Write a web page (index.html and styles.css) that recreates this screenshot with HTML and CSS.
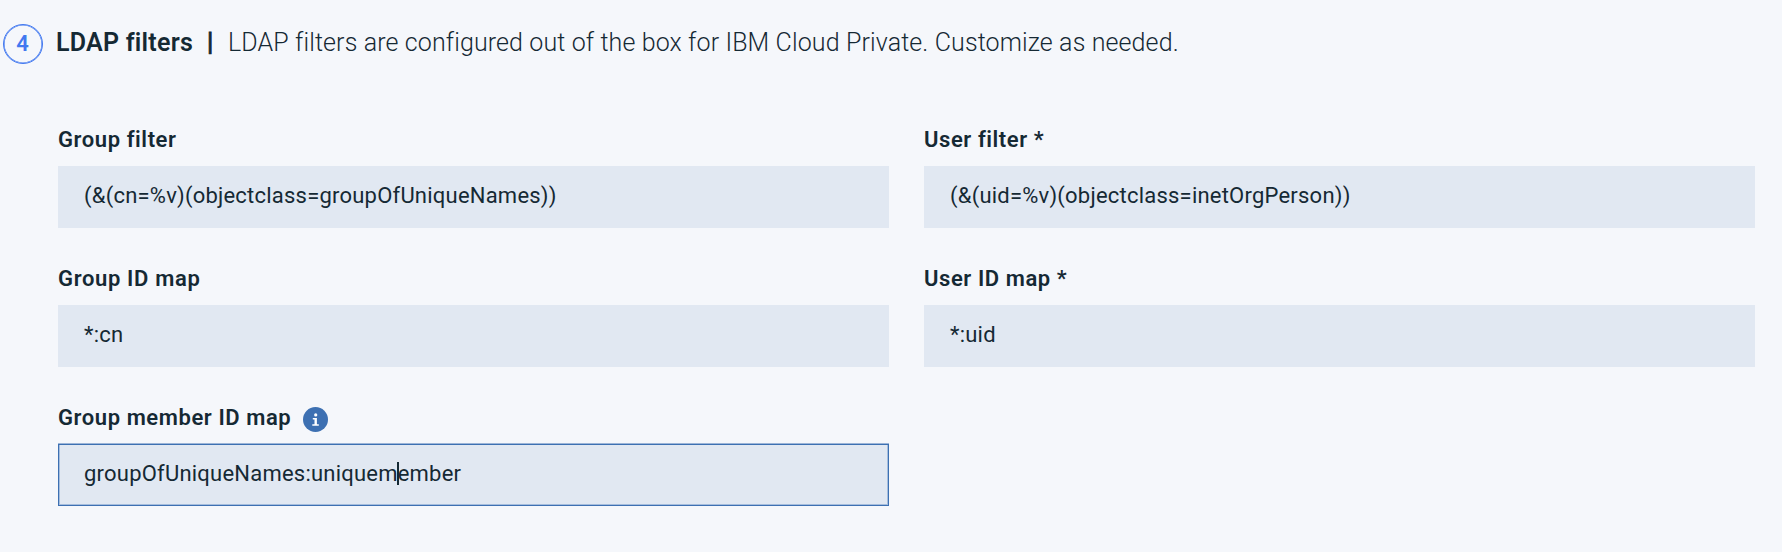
FILE: index.html
```
<!DOCTYPE html>
<html lang="en">
<head>
<meta charset="utf-8">
<title>LDAP filters</title>
<link rel="stylesheet" href="styles.css">
</head>
<body>
<section class="step">
  <header class="step-header">
    <span class="step-number">4</span>
    <h2 class="step-title">LDAP filters</h2>
    <span class="divider">|</span>
    <p class="step-description">LDAP filters are configured out of the box for IBM Cloud Private. Customize as needed.</p>
  </header>
  <div class="fields">
    <div class="field">
      <div class="label">Group filter</div>
      <div class="input">(&amp;(cn=%v)(objectclass=groupOfUniqueNames))</div>
    </div>
    <div class="field">
      <div class="label">User filter *</div>
      <div class="input">(&amp;(uid=%v)(objectclass=inetOrgPerson))</div>
    </div>
    <div class="field">
      <div class="label spaced">Group ID map</div>
      <div class="input">*:cn</div>
    </div>
    <div class="field">
      <div class="label">User ID map *</div>
      <div class="input">*:uid</div>
    </div>
    <div class="field">
      <div class="label">Group member ID map
        <svg class="info" viewBox="0 0 25 25" aria-hidden="true">
          <circle cx="12.5" cy="12.5" r="12.5" fill="#3d70b2"/>
          <circle cx="12.7" cy="7.9" r="1.6" fill="#fff"/>
          <path d="M9.8 11h4.1v6.2h1.9v1.6H9.3v-1.6h2.2v-4.6H9.8z" fill="#fff"/>
        </svg>
      </div>
      <div class="input focused">groupOfUniqueNames:uniquem<span class="caret"></span>ember</div>
    </div>
  </div>
</section>
</body>
</html>
```
FILE: styles.css
```
* { box-sizing: border-box; }

body {
  margin: 0;
  background: #f5f7fb;
  color: #152934;
  font-family: Roboto, "Liberation Sans", sans-serif;
}

.step { padding: 24px 27px 0 3px; }

.step-header {
  display: flex;
  align-items: flex-start;
  height: 103px;
}

.step-number {
  display: flex;
  align-items: center;
  justify-content: center;
  width: 40px;
  height: 40px;
  margin-right: 13px;
  padding: 0 1px 1px 0;
  border: 1px solid #4178f0;
  border-radius: 50%;
  box-shadow: inset 0 0 0 0.6px #4178f0;
  color: #4178f0;
  font-size: 22px;
  font-weight: 600;
}

.step-title,
.divider,
.step-description {
  margin: 4px 0 0;
  font-size: 25px;
  line-height: 30px;
  white-space: nowrap;
}

.step-title {
  width: 151px;
  font-weight: 600;
  letter-spacing: 0.25px;
}

.divider {
  width: 21px;
  font-weight: 600;
  -webkit-text-stroke: 0.8px #152934;
}

.step-description {
  font-weight: 300;
  letter-spacing: 0.12px;
}

.fields {
  display: grid;
  grid-template-columns: 1fr 1fr;
  gap: 37px 35px;
  padding-left: 55px;
}

.label {
  display: flex;
  align-items: center;
  gap: 12px;
  height: 26px;
  margin-bottom: 13px;
  font-size: 22px;
  font-weight: 600;
  line-height: 26px;
  letter-spacing: 0.58px;
}

.field { height: 102px; margin-bottom: 0; }

.label.spaced { letter-spacing: 0.65px; }

.info {
  width: 25px;
  height: 25px;
  margin-top: 2px;
}

.input {
  display: flex;
  align-items: center;
  height: 62px;
  padding: 0 26px 3px;
  background: #e1e8f2;
  font-size: 22px;
  line-height: 26px;
  letter-spacing: 0.22px;
}

.focused {
  padding: 0 25px 3px;
  border: 1px solid #3d70b2;
  box-shadow: 0 -1px 0 #9cb5d8, inset 1px -1px 0 #a5bddd, inset -1px 0 0 #a5bddd;
}

.caret {
  width: 2px;
  height: 23px;
  margin: 0 -1px;
  background: #152934;
}
```
